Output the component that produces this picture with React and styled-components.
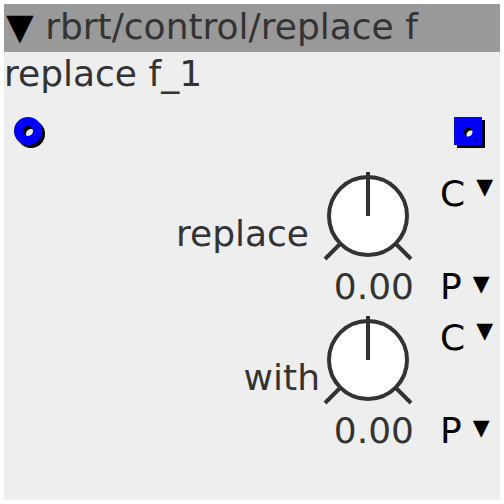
import React from 'react';
import styled, { createGlobalStyle } from 'styled-components';

const GlobalStyle = createGlobalStyle`
  html, body {
    margin: 0;
    padding: 0;
    background: #ffffff;
  }
  body {
    font-family: "DejaVu Sans", "Liberation Sans", sans-serif;
  }
`;

const Panel = styled.div`
  margin: 4px;
  width: 496px;
  height: 496px;
  background: #eeeeee;
  display: flex;
  flex-direction: column;
  overflow: hidden;
`;

const TitleBar = styled.div`
  background: #999999;
  color: #333333;
  font-size: 36px;
  line-height: 42px;
  padding: 2px 0 4px 2px;
  white-space: nowrap;
  overflow: hidden;
`;

const TitleCaret = styled.span`
  color: #000000;
`;

const NodeName = styled.div`
  color: #333333;
  font-size: 36px;
  line-height: 42px;
  margin-top: 1px;
`;

const PortRow = styled.div`
  display: flex;
  justify-content: space-between;
  padding: 0 14px 0 10px;
  margin-top: 22px;
`;

const Knobs = styled.div`
  display: flex;
  flex-direction: column;
  gap: 6px;
  margin-top: 21px;
`;

const KnobBlock = styled.div`
  display: grid;
  grid-template-columns: 1fr 96px 84px;
  align-items: start;
`;

const Label = styled.div`
  justify-self: end;
  color: #333333;
  font-size: 36px;
  line-height: 42px;
  margin-top: 43px;
  margin-right: ${p => p.$inset}px;
`;

const KnobCol = styled.div`
  display: flex;
  flex-direction: column;
`;

const Value = styled.div`
  color: #333333;
  font-size: 36px;
  line-height: 42px;
  margin-top: 4px;
  text-align: right;
  padding-right: 2px;
  white-space: nowrap;
`;

const Side = styled.div`
  display: flex;
  flex-direction: column;
  justify-content: space-between;
  height: 135px;
  padding: 3px 0 0 24px;
`;

const Select = styled.div`
  display: flex;
  align-items: flex-start;
  color: #000000;
  font-size: 36px;
  line-height: 42px;
  white-space: nowrap;
`;

const Caret = styled.span`
  font-size: 22px;
  line-height: 22px;
  margin-left: 11px;
  margin-top: ${p => p.$drop}px;
`;

const InletPort = () => (
  <svg width="32" height="32" viewBox="0 0 32 32">
    <circle cx="17" cy="17" r="9.5" fill="none" stroke="#000" strokeWidth="9" />
    <circle cx="14" cy="14" r="9.5" fill="none" stroke="#0000ff" strokeWidth="9" />
  </svg>
);

const squareWithHole = (x, y) =>
  `M${x} ${y}h28v28h-28z M${x + 9.5} ${y + 15}a4.5 4.5 0 1 0 9 0a4.5 4.5 0 1 0 -9 0z`;

const OutletPort = () => (
  <svg width="32" height="32" viewBox="0 0 32 32">
    <path d={squareWithHole(3, 3)} fill="#000" fillRule="evenodd" />
    <path d={squareWithHole(0, 0)} fill="#0000ff" fillRule="evenodd" />
    {[[5, 6], [23, 6], [5, 23], [23, 23]].map(([x, y]) => (
      <circle key={`${x}-${y}`} cx={x} cy={y} r="0.9" fill="#000033" />
    ))}
  </svg>
);

const KnobDial = () => (
  <svg width="96" height="92" viewBox="0 0 96 92">
    <g stroke="#333333" strokeWidth="4">
      <line x1="48" y1="46" x2="5" y2="89" />
      <line x1="48" y1="46" x2="91" y2="89" />
      <circle cx="48" cy="46" r="39" fill="#ffffff" />
      <line x1="48" y1="2" x2="48" y2="46" />
    </g>
  </svg>
);

const params = [
  { name: 'replace', value: '0.00', inset: 11 },
  { name: 'with', value: '0.00', inset: 0 },
];

const Knob = ({ name, value, inset }) => (
  <KnobBlock>
    <Label $inset={inset}>{name}</Label>
    <KnobCol>
      <KnobDial />
      <Value>{value}</Value>
    </KnobCol>
    <Side>
      <Select>C<Caret $drop={2.5}>▼</Caret></Select>
      <Select>P<Caret $drop={6.5}>▼</Caret></Select>
    </Side>
  </KnobBlock>
);

export default function App() {
  return (
    <>
      <GlobalStyle />
      <Panel>
        <TitleBar><TitleCaret>▼</TitleCaret> rbrt/control/replace f</TitleBar>
        <NodeName>replace f_1</NodeName>
        <PortRow>
          <InletPort />
          <OutletPort />
        </PortRow>
        <Knobs>
          {params.map(p => <Knob key={p.name} {...p} />)}
        </Knobs>
      </Panel>
    </>
  );
}
